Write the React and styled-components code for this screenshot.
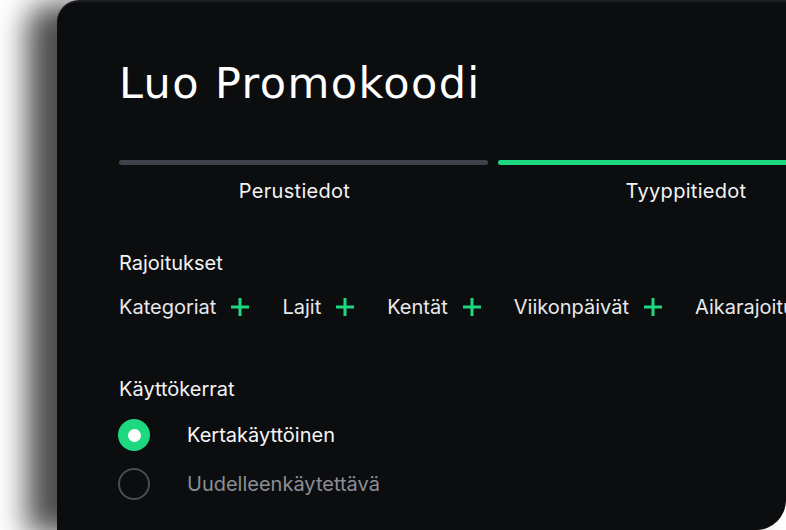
import React, { useState } from "react";
import styled, { createGlobalStyle } from "styled-components";

const GlobalStyle = createGlobalStyle`
  html, body {
    margin: 0;
    padding: 0;
    background: #ffffff;
    overflow: hidden;
  }
  * {
    box-sizing: border-box;
  }
`;

const Page = styled.div`
  width: 786px;
  height: 530px;
  padding-left: 57px;
  overflow: hidden;
  font-family: Inter, "Noto Sans", sans-serif;
`;

const Card = styled.div`
  width: 729px;
  height: 530px;
  background: #0c0d0f;
  border-top: 2px solid #1d1e21;
  border-radius: 22px 0 30px 0;
  box-shadow: -30px 4px 30px rgba(0, 0, 0, 0.7);
  padding: 57px 0 0 62px;
  overflow: hidden;
  color: #f3f3f3;
`;

const Title = styled.h1`
  margin: 0;
  font-family: "DejaVu Sans", Inter, sans-serif;
  font-weight: 400;
  font-size: 43px;
  line-height: 49px;
  letter-spacing: 1.4px;
  color: #ffffff;
`;

const Steps = styled.div`
  display: grid;
  grid-template-columns: repeat(2, 369px);
  column-gap: 10px;
  margin-top: 52px;
`;

const Step = styled.div`
  display: flex;
  flex-direction: column;
  align-items: center;
  gap: 14px;
`;

const Bar = styled.div`
  width: 100%;
  height: 5px;
  border-radius: 3px;
  background: ${(p) => (p.$active ? "#1ed880" : "#3e4149")};
`;

const StepLabel = styled.span`
  font-size: 20px;
  line-height: 24px;
  letter-spacing: 0.3px;
  margin-left: ${(p) => p.$shift}px;
`;

const SectionTitle = styled.h2`
  margin: ${(p) => p.$top}px 0 0;
  font-size: 20px;
  font-weight: 400;
  line-height: 24px;
`;

const ChipRow = styled.div`
  display: flex;
  align-items: center;
  gap: 33px;
  margin-top: 20px;
  white-space: nowrap;
`;

const Chip = styled.button`
  display: flex;
  align-items: center;
  gap: 15px;
  padding: 0;
  border: none;
  background: none;
  color: #e8e8e8;
  font: inherit;
  font-size: 20px;
  line-height: 24px;
  cursor: pointer;
`;

const RadioList = styled.div`
  display: flex;
  flex-direction: column;
  gap: 17px;
  margin-top: 18px;
`;

const RadioRow = styled.label`
  display: flex;
  align-items: center;
  gap: 37px;
  cursor: pointer;
  font-size: 20px;
  line-height: 24px;
  color: ${(p) => (p.$checked ? "#f6f6f6" : "#8b8e95")};
`;

const RadioDot = styled.span`
  width: 32px;
  height: 32px;
  margin-left: -1px;
  border-radius: 50%;
  display: flex;
  align-items: center;
  justify-content: center;
  background: ${(p) => (p.$checked ? "#1ed880" : "transparent")};
  border: ${(p) => (p.$checked ? "none" : "2px solid #4a4d55")};

  &::after {
    content: "";
    width: 13px;
    height: 13px;
    border-radius: 50%;
    background: #ffffff;
    display: ${(p) => (p.$checked ? "block" : "none")};
  }
`;

const PlusIcon = () => (
  <svg width="18" height="18" viewBox="0 0 18 18">
    <path d="M9 0v18M0 9h18" stroke="#1ed880" strokeWidth="3" />
  </svg>
);

const limits = ["Kategoriat", "Lajit", "Kentät", "Viikonpäivät", "Aikarajoitukset"];

const App = () => {
  const [usage, setUsage] = useState("single");

  return (
    <>
      <GlobalStyle />
      <Page>
        <Card>
          <Title>Luo Promokoodi</Title>
          <Steps>
            <Step>
              <Bar />
              <StepLabel $shift={-18}>Perustiedot</StepLabel>
            </Step>
            <Step>
              <Bar $active />
              <StepLabel $shift={7}>Tyyppitiedot</StepLabel>
            </Step>
          </Steps>

          <SectionTitle $top={48}>Rajoitukset</SectionTitle>
          <ChipRow>
            {limits.map((l) => (
              <Chip key={l}>
                {l}
                <PlusIcon />
              </Chip>
            ))}
          </ChipRow>

          <SectionTitle $top={58}>Käyttökerrat</SectionTitle>
          <RadioList>
            <RadioRow $checked={usage === "single"} onClick={() => setUsage("single")}>
              <RadioDot $checked={usage === "single"} />
              Kertakäyttöinen
            </RadioRow>
            <RadioRow $checked={usage === "multi"} onClick={() => setUsage("multi")}>
              <RadioDot $checked={usage === "multi"} />
              Uudelleenkäytettävä
            </RadioRow>
          </RadioList>
        </Card>
      </Page>
    </>
  );
};

export default App;
